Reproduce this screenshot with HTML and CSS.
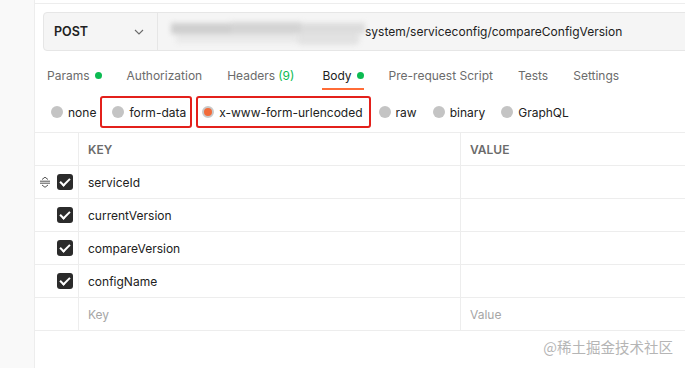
FILE: index.html
```html
<!DOCTYPE html>
<html lang="en">
<head>
  <meta charset="UTF-8">
  <meta name="viewport" content="width=device-width, initial-scale=1.0">
  <title>compareConfigVersion</title>
  <link rel="stylesheet" href="styles.css">
</head>
<body>
  <div class="app">
    <!-- левая полоса -->
    <div class="sidebar"></div>

    <div class="main">
      <div class="panel">
        <!-- строка запроса -->
        <div class="url-bar">
          <div class="method">
            <span>POST</span>
            <svg class="chevron" width="10" height="6" viewBox="0 0 10 6"><path d="M1 1l4 4 4-4" fill="none" stroke="#6b6b6b" stroke-width="1.1"/></svg>
          </div>
          <div class="url">
            <div class="blur">
              <i class="b1"></i><i class="b2"></i><i class="b3"></i><i class="b4"></i><i class="b5"></i>
            </div>
            <span class="url-text">system/serviceconfig/compareConfigVersion</span>
          </div>
        </div>

        <!-- вкладки -->
        <div class="tabs">
          <div class="tab">Params <span class="dot"></span></div>
          <div class="tab">Authorization</div>
          <div class="tab">Headers <span class="count">(9)</span></div>
          <div class="tab active">Body <span class="dot"></span></div>
          <div class="tab">Pre-request Script</div>
          <div class="tab">Tests</div>
          <div class="tab">Settings</div>
        </div>

        <!-- типы тела -->
        <div class="radios">
          <label class="radio"><span class="circle"></span>none</label>
          <label class="radio marked mark-a"><span class="circle"></span>form-data</label>
          <label class="radio marked mark-b"><span class="circle on"></span>x-www-form-urlencoded</label>
          <label class="radio"><span class="circle"></span>raw</label>
          <label class="radio"><span class="circle"></span>binary</label>
          <label class="radio"><span class="circle"></span>GraphQL</label>
        </div>

        <!-- таблица параметров -->
        <div class="table">
          <div class="row head">
            <div class="cell handle"></div>
            <div class="cell key">KEY</div>
            <div class="cell value">VALUE</div>
          </div>
          <div class="row">
            <div class="cell handle">
              <svg class="drag" width="12" height="12" viewBox="0 0 12 12"><path d="M3 3.5L6 1.2l3 2.3M1 5.2h10M1 7.2h10M3 9L6 11.3 9 9" fill="none" stroke="#555" stroke-width="1"/></svg>
              <span class="check"></span>
            </div>
            <div class="cell key">serviceId</div>
            <div class="cell value"></div>
          </div>
          <div class="row">
            <div class="cell handle"><span class="check"></span></div>
            <div class="cell key">currentVersion</div>
            <div class="cell value"></div>
          </div>
          <div class="row">
            <div class="cell handle"><span class="check"></span></div>
            <div class="cell key">compareVersion</div>
            <div class="cell value"></div>
          </div>
          <div class="row">
            <div class="cell handle"><span class="check"></span></div>
            <div class="cell key">configName</div>
            <div class="cell value"></div>
          </div>
          <div class="row">
            <div class="cell handle"></div>
            <div class="cell key placeholder">Key</div>
            <div class="cell value placeholder">Value</div>
          </div>
        </div>
      </div>
    </div>
  </div>

  <div class="watermark">@稀土掘金技术社区</div>
</body>
</html>
```

FILE: styles.css
```css
body {
  margin: 0;
  padding: 0;
  font-family: Inter, "Noto Sans", sans-serif;
  font-size: 12px;
  color: #212121;
  background-color: #fff;
}

.app {
  display: flex;
  height: 368px;
  overflow: hidden;
}

.sidebar {
  width: 34px;
  flex-shrink: 0;
  background-color: #f9f9f9;
  border-right: 1px solid #ededed;
}

.main {
  flex: 1;
  padding-top: 3px;
  overflow: hidden;
}

.panel {
  border-top: 1px solid #ededed;
  padding-top: 8px;
}

/* строка запроса */
.url-bar {
  display: flex;
  height: 39px;
  margin-left: 8px;
  width: calc(100% + 20px);
  box-sizing: border-box;
  background-color: #f5f5f5;
  border: 1px solid #e6e6e6;
  border-radius: 4px;
}

.method {
  width: 114px;
  flex-shrink: 0;
  display: flex;
  align-items: center;
  justify-content: space-between;
  padding: 0 13px 0 10px;
  box-sizing: border-box;
  border-right: 1px solid #e6e6e6;
  font-weight: 600;
  font-size: 12.5px;
}

.url {
  display: flex;
  align-items: center;
  padding-left: 13px;
}

.blur {
  position: relative;
  width: 194px;
  height: 24px;
  margin-top: 2px;
  filter: blur(2.5px);
}

.blur i {
  position: absolute;
  display: block;
  background-color: #c9c9c9;
}

.blur .b1 { left: 0; top: 2px; width: 60px; height: 11px; background-color: #cfcfcf; }
.blur .b2 { left: 60px; top: 1px; width: 70px; height: 12px; background-color: #d4d4d4; }
.blur .b3 { left: 130px; top: 2px; width: 64px; height: 11px; background-color: #dcdcdc; }
.blur .b4 { left: 5px; top: 13px; width: 120px; height: 9px; background-color: #e9e9e9; }
.blur .b5 { left: 125px; top: 12px; width: 64px; height: 12px; background-color: #e2e2e2; border-radius: 6px; }

/* вкладки */
.tabs {
  display: flex;
  gap: 25px;
  margin-top: 8px;
  padding-left: 12px;
}

.tab {
  display: flex;
  align-items: center;
  gap: 5px;
  height: 31px;
  padding-top: 4px;
  box-sizing: border-box;
  border-bottom: 2px solid transparent;
  color: #6b6b6b;
}

.tab.active {
  margin-left: 3px;
  color: #212121;
  border-bottom-color: #ff6c37;
}

.dot {
  width: 7px;
  height: 7px;
  border-radius: 50%;
  background-color: #0cbb52;
}

.count {
  color: #0cbb52;
  margin-left: -2px;
}

/* типы тела */
.radios {
  display: flex;
  align-items: center;
  gap: 16px;
  height: 42px;
  padding: 2px 0 0 16px;
  box-sizing: border-box;
}

.radio {
  position: relative;
  display: flex;
  align-items: center;
  gap: 5px;
  color: #212121;
}

.circle {
  width: 12px;
  height: 12px;
  border-radius: 50%;
  background-color: #c4c4c4;
  box-sizing: border-box;
}

.circle.on {
  border: 2px solid #c9c9c9;
  background-color: #f26b3a;
}

/* красные рамки-пометки */
.marked::after {
  content: "";
  position: absolute;
  top: -9px;
  bottom: -8px;
  border: 2px solid #e3201b;
  border-radius: 3px;
}

.mark-a::after { left: -12px; right: -6px; }
.mark-b::after { left: -6px; right: -8px; }

/* таблица */
.table {
  border-top: 1px solid #ededed;
}

.row {
  display: flex;
  height: 33px;
  box-sizing: border-box;
  border-bottom: 1px solid #ededed;
}

.cell {
  display: flex;
  align-items: center;
}

.handle {
  width: 44px;
  flex-shrink: 0;
  justify-content: flex-end;
  padding-right: 5px;
  box-sizing: border-box;
  border-right: 1px solid #ededed;
  position: relative;
}

.key {
  width: 382px;
  flex-shrink: 0;
  padding-left: 9px;
  box-sizing: border-box;
  border-right: 1px solid #ededed;
}

.value {
  flex: 1;
  padding-left: 9px;
}

.head .cell {
  font-weight: 600;
  font-size: 12px;
  color: #6b6b6b;
}

.placeholder {
  color: #a6a6a6;
}

.drag {
  position: absolute;
  left: 4px;
  top: 10px;
}

.check {
  width: 16px;
  height: 16px;
  border-radius: 3px;
  background-color: #2b2b2b;
  position: relative;
}

.check::after {
  content: "";
  position: absolute;
  left: 5px;
  top: 2px;
  width: 4px;
  height: 8px;
  border: solid #fff;
  border-width: 0 2px 2px 0;
  transform: rotate(45deg);
}

.watermark {
  position: absolute;
  right: 12px;
  bottom: 11px;
  font-family: "Noto Sans CJK SC", sans-serif;
  font-size: 14.5px;
  color: #b5b5b5;
}
```
